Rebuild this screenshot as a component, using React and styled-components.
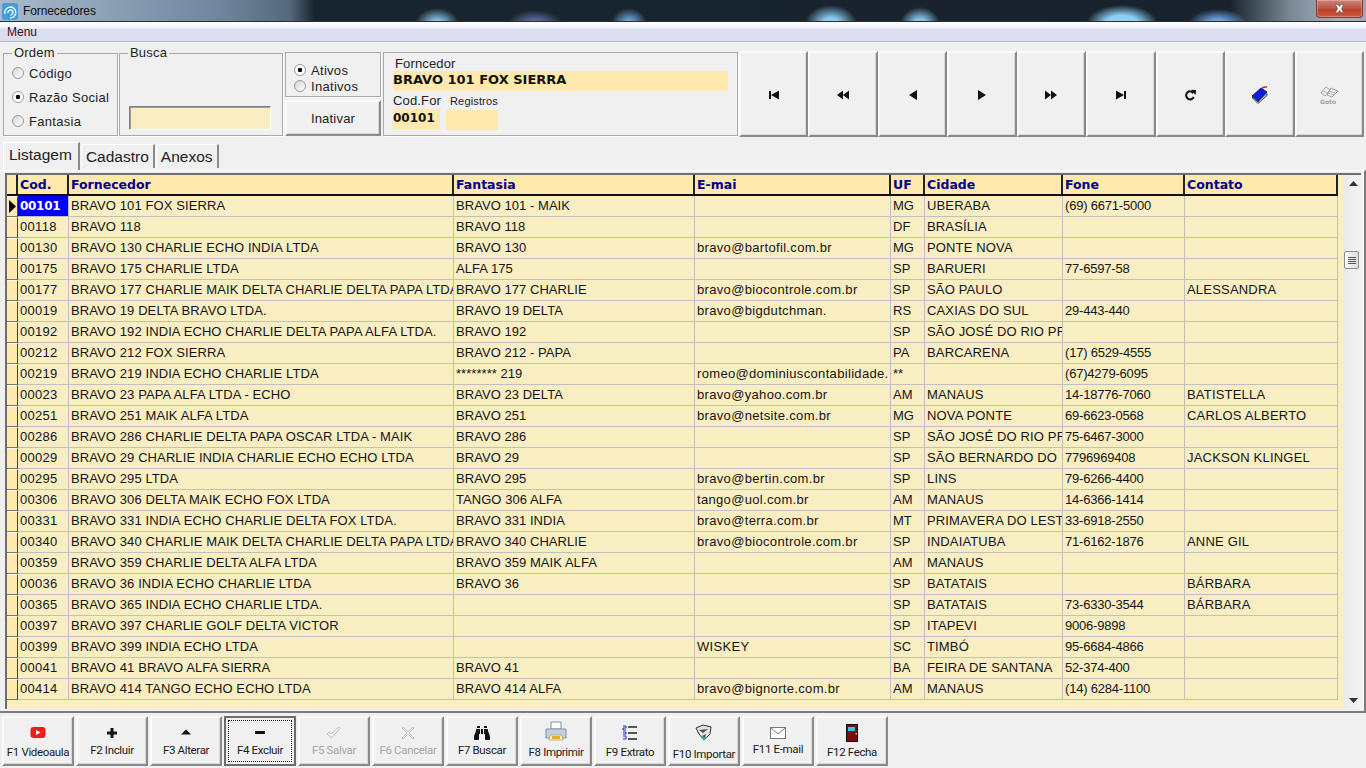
import React from 'react';
import styled, { createGlobalStyle, css } from 'styled-components';
import { FaBinoculars } from 'react-icons/fa';

const Global = createGlobalStyle`
  html, body { margin: 0; padding: 0; background: #f0f0f0; overflow: hidden; }
  * { box-sizing: border-box; }
  body { font-family: "Liberation Sans", Arial, sans-serif; color: #111; }
`;

const COLS = '11px 51px 385px 241px 196px 34px 138px 122px 153px';
const CREAM = '#f9eec2';
const GOLD = '#ffe9ac';

const Window = styled.div`
  width: 1366px; height: 768px; display: flex; flex-direction: column; overflow: hidden; background: #f0f0f0;
`;
const TitleBar = styled.header`
  height: 22px; flex: none; display: flex; align-items: flex-start; gap: 4px; padding: 2px 4px 0 2px;
  border-bottom: 1px solid #2a2e33;
  background:
    radial-gradient(ellipse 26px 19px at 831px 24px, #8fcdf0 30%, transparent 100%),
    radial-gradient(ellipse 20px 17px at 920px 24px, #86c2e6 30%, transparent 100%),
    radial-gradient(ellipse 36px 19px at 1122px 24px, #8fd0f5 45%, transparent 100%),
    radial-gradient(ellipse 30px 15px at 1218px 24px, #6f9fe0 30%, transparent 100%),
    radial-gradient(ellipse 22px 16px at 437px 24px, #88bde0 25%, transparent 100%),
    radial-gradient(ellipse 28px 14px at 535px 24px, #5d6c9a 25%, transparent 100%),
    radial-gradient(ellipse 18px 16px at 629px 24px, #6b9fd0 25%, transparent 100%),
    linear-gradient(90deg, #a9bacb 0, #8ea3b8 100px, #6d8298 230px, #54687d 290px, #18242f 315px, #18232d 1230px, #7b8894 1290px, #a3b1c1 1340px, #9aa8b8 1366px);
`;
const AppIcon = styled.svg`width: 16px; height: 17px; flex: none; margin-top: 1px;`;
const TitleText = styled.span`
  font-size: 12px; line-height: 18px; color: #0d0d0d; margin-left: 1px; letter-spacing: -0.1px;
`;
const CloseButton = styled.div`
  margin-left: auto; width: 47px; height: 18px; margin-top: -2px; margin-right: -1px;
  border: 1px solid #7a3d38; border-top: none; border-radius: 0 0 4px 4px;
  display: flex; align-items: center; justify-content: center;
  background: linear-gradient(#cf8577 0, #b85a4c 45%, #c13c22 60%, #c95a44 100%);
  box-shadow: inset 0 0 0 1px rgba(255,255,255,.25);
`;
const MenuBar = styled.nav`
  height: 20px; flex: none; padding: 3px 0 0 7px; font-size: 12px; line-height: 14px; color: #3c0a1e;
  background: linear-gradient(#ffffff 0, #f0f1f9 6px, #dadeef 7px, #dadeef 100%);
  border-bottom: 1px solid #b4b6c2;
`;
const Toolbar = styled.section`
  flex: none; height: 95px; display: flex; gap: 1px; padding: 9px 2px 0 3px;
`;
const raised = css`
  background: #f0f0f0;
  border: 2px solid; border-color: #fbfbfb #8a8a8a #8a8a8a #fbfbfb;
  box-shadow: inset -1px -1px 0 #d8d8d8;
`;
const Group = styled.fieldset`
  margin: -4px 0 0; padding: 2px 8px 5px; height: 89px; width: ${p => p.$w}px; min-width: 0; flex: none;
  border: 1px solid #a8a8a8; box-shadow: 1px 1px 0 #fff; display: flex; flex-direction: column;
  justify-content: ${p => p.$end ? 'flex-end' : 'flex-start'};
`;
const GroupLegend = styled.legend`
  padding: 0 2px; font-size: 13px; line-height: 12px; color: #222; letter-spacing: .2px;
`;
const RadioRow = styled.label`
  display: flex; flex: none; align-items: center; gap: 5px; height: ${p => p.$h}px; white-space: nowrap;
  font-size: 13px; letter-spacing: .3px; color: #222;
`;
const RadioDot = styled.span`
  width: 12px; height: 12px; border-radius: 50%; flex: none; border: 1px solid #9a9a9a;
  background: ${p => p.$on
    ? 'radial-gradient(circle, #111 0 2px, #fff 2.6px)'
    : 'linear-gradient(135deg, #d5d5d5, #fff)'};
`;
const SearchField = styled.div`
  height: 24px; width: 142px; margin-left: 1px; background: ${CREAM};
  border: 1px solid; border-color: #808080 #fff #fff #808080; box-shadow: inset 1px 1px 0 #9c9c9c;
`;
const StatusColumn = styled.div`
  width: 98px; flex: none; display: flex; flex-direction: column; gap: 3px; padding: 1px 1px 0;
`;
const StatusBox = styled.div`
  height: 45px; border: 1px solid #a8a8a8; box-shadow: 1px 1px 0 #fff; padding: 9px 0 0 8px; display: flex; flex-direction: column;
`;
const InactivateButton = styled.button`
  ${raised}; height: 36px; padding: 0; font: 13px "Liberation Sans", Arial, sans-serif; letter-spacing: .2px; color: #222;
`;
const SupplierPanel = styled.div`
  width: 355px; flex: none; height: 84px; margin-top: 1px; padding: 4px 9px 0;
  border: 1px solid #a8a8a8; box-shadow: 1px 1px 0 #fff; font-size: 13px;
`;
const FieldLabel = styled.div`
  color: #222; line-height: 14px; font-size: ${p => p.$fs ?? 13}px; margin-left: ${p => p.$ml ?? 0}px; letter-spacing: .15px;
`;
const ValueBox = styled.div`
  background: ${GOLD}; height: 20px; width: ${p => p.$w ? `${p.$w}px` : '100%'};
  font: bold ${p => p.$fs ?? 13}px/18px "DejaVu Sans", Verdana, sans-serif; color: #111; white-space: nowrap; overflow: hidden;
`;
const SubFields = styled.div`display: flex; gap: 5px; margin-top: 3px;`;
const SubField = styled.div`display: flex; flex-direction: column; gap: ${p => p.$gap ?? 1}px;`;
const NavGroup = styled.div`display: flex; width: 625px; flex: none; height: 86px;`;
const NavButton = styled.button`
  ${raised}; flex: 1; padding: 1px 0 0; display: flex; align-items: center; justify-content: center;
`;
const Glyph = styled.svg`
  width: ${p => p.$w ?? p.$s ?? 12}px; height: ${p => p.$s ?? 12}px; flex: none; display: block;
`;
const TabBar = styled.div`
  flex: none; height: 33px; padding: 5px 0 0 3px; display: flex; align-items: flex-start;
`;
const Tab = styled.div`
  height: ${p => p.$on ? 28 : 24}px; margin-top: ${p => p.$on ? 0 : 2}px; padding: 0 ${p => p.$on ? 6 : 4}px 0 ${p => p.$on ? 5 : 4}px;
  margin-right: 1px; font-size: 15.5px; line-height: ${p => p.$on ? 24 : 23}px; color: #222;
  border-top: 1px solid #fff; border-left: 1px solid #fff; border-right: 2px solid #8c8c8c;
  background: #f0f0f0;
`;
const Sheet = styled.main`
  flex: none; height: 541px; padding: 2px 0 2px 5px; display: flex; flex-direction: column;
  border-top: 1px solid #fff; border-right: 2px solid #7a7a7a; box-shadow: inset -1px 0 0 #fff;
`;
const GridFrame = styled.div`
  flex: 1; min-height: 0; display: flex; background: ${CREAM}; margin-right: 3px;
  border-top: 2px solid #6e6e6e; border-left: 2px solid #6e6e6e;
`;
const GridBody = styled.div`flex: none; width: 1337px;`;
const HeadRow = styled.div`
  display: grid; grid-template-columns: ${COLS}; width: 1331px; height: 21px; background: ${GOLD};
  border-bottom: 2px solid #111; border-right: 1px solid #111;
`;
const HeadCell = styled.div`
  padding-left: 2px; font: bold 12.5px/19px "DejaVu Sans", Verdana, sans-serif; color: #00008b;
  border-right: 2px solid #222; overflow: hidden; white-space: nowrap;
`;
const DataRow = styled.div`
  display: grid; grid-template-columns: ${COLS}; width: 1331px; height: 21px;
`;
const Marker = styled.div`
  background: ${GOLD}; border-right: 1px solid #444; border-bottom: 1px solid #777; border-top: 1px solid #fff;
  display: flex; align-items: center; justify-content: center;
`;
const Cell = styled.div`
  padding-left: 2px; font-size: 13px; line-height: 20px; color: #141414; white-space: nowrap; overflow: hidden;
  letter-spacing: ${p => p.$track ?? 0.1}px;
  border-right: 1px solid #c0c0c0; border-bottom: 1px solid #c0c0c0;
`;
const KeyCell = styled(Cell)`
  letter-spacing: .3px;
  ${p => p.$on && css`
    background: #0000ff; color: #fff; font: bold 12px/20px "DejaVu Sans", Verdana, sans-serif; letter-spacing: -.3px;
  `}
`;
const Scrollbar = styled.aside`
  width: 18px; flex: none; background: linear-gradient(90deg, #eaeaea, #f4f4f4); display: flex; flex-direction: column; align-items: center;
`;
const ScrollArrow = styled.div`
  height: 17px; width: 100%; display: flex; align-items: center; justify-content: center; flex: none;
  ${p => p.$end && 'margin-top: auto;'}
`;
const ScrollThumb = styled.div`
  margin: 59px 3px 0 0; width: 15px; height: 18px; border: 1px solid #8d8d8d; border-radius: 2px;
  background: linear-gradient(90deg, #fafafa, #dcdcdc); display: flex; flex-direction: column; align-items: center; justify-content: center; gap: 1px;
`;
const ThumbLine = styled.i`display: block; width: 8px; height: 1px; background: #555;`;
const Footer = styled.footer`
  flex: 1; border-top: 2px solid #7c7c7c; padding: 3px 2px 0; display: flex; gap: 2px;
`;
const FnButton = styled.button`
  ${raised}; width: 72px; height: 50px; padding: ${p => p.$top ?? 6}px 0 0; display: flex; flex-direction: column; align-items: center;
  font: 11.5px/14px Roboto, "Liberation Sans", Arial, sans-serif; letter-spacing: -.35px; color: ${p => p.$off ? '#a6a6a6' : '#1a1a1a'}; white-space: nowrap;
  ${p => p.$focus && css`
    border: 2px solid #6c6c6c; outline: 1px dotted #111; outline-offset: -5px; box-shadow: none;
  `}
`;
const FnIcon = styled.span`
  height: 18px; display: flex; align-items: center; justify-content: center; margin-bottom: ${p => p.$gap ?? 1}px; flex: none;
`;

const rows = [
  ['00101','BRAVO 101 FOX SIERRA','BRAVO 101 - MAIK','','MG','UBERABA','(69) 6671-5000',''],
  ['00118','BRAVO 118','BRAVO 118','','DF','BRASÍLIA','',''],
  ['00130','BRAVO 130 CHARLIE ECHO INDIA LTDA','BRAVO 130','bravo@bartofil.com.br','MG','PONTE NOVA','',''],
  ['00175','BRAVO 175 CHARLIE LTDA','ALFA 175','','SP','BARUERI','77-6597-58',''],
  ['00177','BRAVO 177 CHARLIE MAIK DELTA CHARLIE DELTA PAPA LTDA','BRAVO 177 CHARLIE','bravo@biocontrole.com.br','SP','SÃO PAULO','','ALESSANDRA'],
  ['00019','BRAVO 19 DELTA BRAVO LTDA.','BRAVO 19 DELTA','bravo@bigdutchman.','RS','CAXIAS DO SUL','29-443-440',''],
  ['00192','BRAVO 192 INDIA ECHO CHARLIE DELTA PAPA ALFA LTDA.','BRAVO 192','','SP','SÃO JOSÉ DO RIO PRETO','',''],
  ['00212','BRAVO 212 FOX SIERRA','BRAVO 212 - PAPA','','PA','BARCARENA','(17) 6529-4555',''],
  ['00219','BRAVO 219 INDIA ECHO CHARLIE LTDA','******** 219','romeo@dominiuscontabilidade.','**','','(67)4279-6095',''],
  ['00023','BRAVO 23 PAPA ALFA LTDA - ECHO','BRAVO 23 DELTA','bravo@yahoo.com.br','AM','MANAUS','14-18776-7060','BATISTELLA'],
  ['00251','BRAVO 251 MAIK ALFA LTDA','BRAVO 251','bravo@netsite.com.br','MG','NOVA PONTE','69-6623-0568','CARLOS ALBERTO'],
  ['00286','BRAVO 286 CHARLIE DELTA PAPA OSCAR LTDA - MAIK','BRAVO 286','','SP','SÃO JOSÉ DO RIO PRETO','75-6467-3000',''],
  ['00029','BRAVO 29 CHARLIE INDIA CHARLIE ECHO ECHO LTDA','BRAVO 29','','SP','SÃO BERNARDO DO','7796969408','JACKSON KLINGEL'],
  ['00295','BRAVO 295 LTDA','BRAVO 295','bravo@bertin.com.br','SP','LINS','79-6266-4400',''],
  ['00306','BRAVO 306 DELTA MAIK ECHO FOX LTDA','TANGO 306 ALFA','tango@uol.com.br','AM','MANAUS','14-6366-1414',''],
  ['00331','BRAVO 331 INDIA ECHO CHARLIE DELTA FOX LTDA.','BRAVO 331 INDIA','bravo@terra.com.br','MT','PRIMAVERA DO LESTE','33-6918-2550',''],
  ['00340','BRAVO 340 CHARLIE MAIK DELTA CHARLIE DELTA PAPA LTDA','BRAVO 340 CHARLIE','bravo@biocontrole.com.br','SP','INDAIATUBA','71-6162-1876','ANNE GIL'],
  ['00359','BRAVO 359 CHARLIE DELTA ALFA LTDA','BRAVO 359 MAIK ALFA','','AM','MANAUS','',''],
  ['00036','BRAVO 36 INDIA ECHO CHARLIE LTDA','BRAVO 36','','SP','BATATAIS','','BÁRBARA'],
  ['00365','BRAVO 365 INDIA ECHO CHARLIE LTDA.','','','SP','BATATAIS','73-6330-3544','BÁRBARA'],
  ['00397','BRAVO 397 CHARLIE GOLF DELTA VICTOR','','','SP','ITAPEVI','9006-9898',''],
  ['00399','BRAVO 399 INDIA ECHO LTDA','','WISKEY','SC','TIMBÓ','95-6684-4866',''],
  ['00041','BRAVO 41 BRAVO ALFA SIERRA','BRAVO 41','','BA','FEIRA DE SANTANA','52-374-400',''],
  ['00414','BRAVO 414 TANGO ECHO ECHO LTDA','BRAVO 414 ALFA','bravo@bignorte.com.br','AM','MANAUS','(14) 6284-1100',''],
];
const heads = ['', 'Cod.', 'Fornecedor', 'Fantasia', 'E-mai', 'UF', 'Cidade', 'Fone', 'Contato'];
const tracks = [0.1, 0.05, 0.33, 0, 0.15, -0.2, 0.2];

const navIcons = [
  <Glyph viewBox="0 0 12 12" key="first"><path d="M1 2h2v8H1zM3 6l8-4.500v9z" fill="#111" /></Glyph>,
  <Glyph viewBox="0 0 12 12" key="prev"><path d="M0 6l6-4.500v9zM6 6l6-4.500v9z" fill="#111" /></Glyph>,
  <Glyph viewBox="0 0 12 12" key="back"><path d="M2 6l8-5v10z" fill="#111" /></Glyph>,
  <Glyph viewBox="0 0 12 12" key="next"><path d="M10 6L2 1v10z" fill="#111" /></Glyph>,
  <Glyph viewBox="0 0 12 12" key="fwd"><path d="M6 6L0 1.500v9zM12 6L6 1.500v9z" fill="#111" /></Glyph>,
  <Glyph viewBox="0 0 12 12" key="last"><path d="M9 6L1 1.500v9zM9 2h2v8H9z" fill="#111" /></Glyph>,
  <Glyph viewBox="0 0 12 12" key="redo"><path d="M9.500 4.200A4 4 0 1 0 9.800 8" fill="none" stroke="#111" strokeWidth="2" /><path d="M7 .8l5 .2-.4 5z" fill="#111" /></Glyph>,
  <Glyph $s={18} viewBox="0 0 18 18" key="book">
    <path d="M1 10l9-8 6 4-9 9z" fill="#0a1ed8" stroke="#001080" strokeWidth=".8" />
    <path d="M1.500 11l5.500 5 9-8.500v2L7 17.500 1.500 12z" fill="#fff" stroke="#111" strokeWidth=".8" />
    <path d="M11 2.500C12 1 14 .8 16 1" fill="none" stroke="#d01818" strokeWidth="1.600" />
  </Glyph>,
  <Glyph $s={20} viewBox="0 0 20 20" key="goto">
    <path d="M2 8l5-6 4 3-5 6zM8 10l4-7 7 3-6 6z" fill="none" stroke="#9c9c9c" strokeWidth=".9" />
    <path d="M10 6l6 2M9 8l6 2M4 6l4 2" stroke="#a4a4a4" strokeWidth=".8" />
    <text x="1" y="18.500" fontSize="6" fontFamily="DejaVu Sans" fontWeight="bold" fill="#a0a0a0">Goto</text>
  </Glyph>,
];

const fnButtons = [
  { label: 'F1 Videoaula', top: 6, gap: 3, icon: <Glyph $s={18} viewBox="0 0 18 18"><rect x="1.500" y="3" width="15" height="11" rx="3" fill="#ee1c1c" /><path d="M7 6l4.500 2.500L7 11z" fill="#fff" /></Glyph> },
  { label: 'F2 Incluir', icon: <Glyph viewBox="0 0 12 12"><path d="M4.500 1h3v3.500H11v3H7.500V11h-3V7.500H1v-3h3.500z" fill="#111" /></Glyph> },
  { label: 'F3 Alterar', icon: <Glyph viewBox="0 0 12 12"><path d="M6 2.500l5 5H1z" fill="#111" /></Glyph> },
  { label: 'F4 Excluir', focus: true, icon: <Glyph viewBox="0 0 12 12"><path d="M1 4h10v3H1z" fill="#111" /></Glyph> },
  { label: 'F5 Salvar', off: true, icon: <Glyph $s={16} viewBox="0 0 16 16"><path d="M1 9l2-2 2 2 8-7 1 1.500L5.500 13z" fill="#f4f4f4" stroke="#b4b4b4" strokeWidth=".8" /></Glyph> },
  { label: 'F6 Cancelar', off: true, icon: <Glyph $s={14} viewBox="0 0 14 14"><path d="M2 1l5 4.500L12 1l1 1-5 5 5 5-1 1-5-5-5 5-1-1 5-5-5-5z" fill="#f4f4f4" stroke="#b0b0b0" strokeWidth=".7" /></Glyph> },
  { label: 'F7 Buscar', icon: <FaBinoculars size={16} color="#111" /> },
  { label: 'F8 Imprimir', top: 5, gap: 4, icon: <Glyph $s={22} viewBox="0 0 22 22"><path d="M6 1h10v7H6z" fill="#fff" stroke="#8090b0" /><path d="M1 8h20v9H1z" fill="#c6cfe0" stroke="#8090a8" /><path d="M5 14h12l1 5H4z" fill="#f8f0b0" stroke="#a09060" strokeWidth=".6" /><path d="M7 15h8v3H7z" fill="#e8b020" /></Glyph> },
  { label: 'F9 Extrato', gap: 3, icon: <Glyph $s={16} viewBox="0 0 16 16"><path d="M1 1h3M4 1v2H1v2h3M1 7h3v2H1M1 11h3v3H1" fill="none" stroke="#2030b0" strokeWidth="1" /><path d="M6 2h9M6 8h9M6 14h9" stroke="#222" strokeWidth="1.300" /></Glyph> },
  { label: 'F10 Importar', gap: 5, icon: <Glyph $s={18} viewBox="0 0 18 18"><path d="M1 4l7-3 8 2-1 7-6 6-5-6z" fill="#dfe4e4" stroke="#333" strokeWidth="1" /><path d="M4 6l9-1-5 4zM7 12l4-2-1 5z" fill="#555" /><path d="M6 13l3 4 3-4z" fill="#20b0b8" /></Glyph> },
  { label: 'F11 E-mail', gap: 0, icon: <Glyph $s={16} viewBox="0 0 16 16"><rect x=".5" y="2.500" width="15" height="11" fill="#fff" stroke="#777" /><path d="M1 3l7 6 7-6" fill="none" stroke="#777" /></Glyph> },
  { label: 'F12 Fecha', gap: 3, icon: <Glyph $s={18} $w={12} viewBox="3 0 12 18"><rect x="3.500" y=".5" width="11" height="17" fill="#7a0c0c" stroke="#111" /><rect x="5" y="3" width="7" height="4" fill="#20d0e0" /><rect x="12.500" y="9" width="1.500" height="1.500" fill="#f0c040" /></Glyph> },
];

export default function App() {
  return (
    <Window>
      <Global />
      <TitleBar>
        <AppIcon viewBox="0 0 16 17">
          <rect x="0" y="0" width="16" height="17" rx="3" fill="#3f9de0" />
          <path d="M3 11a5.500 5.500 0 1 1 5 4M6 10a2.500 2.500 0 1 1 2.500 2" fill="none" stroke="#fff" strokeWidth="1.300" />
        </AppIcon>
        <TitleText>Fornecedores</TitleText>
        <CloseButton>
          <Glyph $s={11} viewBox="0 0 12 12"><path d="M1.500 1.500h3L6 4l1.500-2.500h3L8 6l2.500 4.500h-3L6 8l-1.500 2.500h-3L4 6z" fill="#fff" stroke="#444" strokeWidth=".6" /></Glyph>
        </CloseButton>
      </TitleBar>
      <MenuBar>Menu</MenuBar>
      <Toolbar>
        <Group $w={115}>
          <GroupLegend>Ordem</GroupLegend>
          <RadioRow $h={24}><RadioDot />Código</RadioRow>
          <RadioRow $h={24}><RadioDot $on />Razão Social</RadioRow>
          <RadioRow $h={24}><RadioDot />Fantasia</RadioRow>
        </Group>
        <Group $w={164} $end>
          <GroupLegend>Busca</GroupLegend>
          <SearchField />
        </Group>
        <StatusColumn>
          <StatusBox>
            <RadioRow $h={16}><RadioDot $on />Ativos</RadioRow>
            <RadioRow $h={16}><RadioDot />Inativos</RadioRow>
          </StatusBox>
          <InactivateButton>Inativar</InactivateButton>
        </StatusColumn>
        <SupplierPanel>
          <FieldLabel $ml={2}>Forncedor</FieldLabel>
          <ValueBox>BRAVO 101 FOX SIERRA</ValueBox>
          <SubFields>
            <SubField>
              <FieldLabel>Cod.For</FieldLabel>
              <ValueBox $w={47} $fs={12}>00101</ValueBox>
            </SubField>
            <SubField $gap={2}>
              <FieldLabel $fs={11} $ml={4}>Registros</FieldLabel>
              <ValueBox $w={52} />
            </SubField>
          </SubFields>
        </SupplierPanel>
        <NavGroup>
          {navIcons.map((icon, i) => <NavButton key={i}>{icon}</NavButton>)}
        </NavGroup>
      </Toolbar>
      <TabBar>
        <Tab $on>Listagem</Tab>
        <Tab>Cadastro</Tab>
        <Tab>Anexos</Tab>
      </TabBar>
      <Sheet>
        <GridFrame>
          <GridBody>
            <HeadRow>{heads.map((h, i) => <HeadCell key={i}>{h}</HeadCell>)}</HeadRow>
            {rows.map((r, i) => (
              <DataRow key={r[0]}>
                <Marker>
                  {i === 0 && <Glyph $s={13} $w={8} viewBox="0 0 8 13"><path d="M1 0l7 6.500L1 13z" fill="#000" /></Glyph>}
                </Marker>
                <KeyCell $on={i === 0}>{r[0]}</KeyCell>
                {r.slice(1).map((v, j) => <Cell key={j} $track={tracks[j]}>{v}</Cell>)}
              </DataRow>
            ))}
          </GridBody>
          <Scrollbar>
            <ScrollArrow><Glyph $s={9} viewBox="0 0 9 9"><path d="M4.500 2L9 7H0z" fill="#333" /></Glyph></ScrollArrow>
            <ScrollThumb><ThumbLine /><ThumbLine /><ThumbLine /><ThumbLine /></ScrollThumb>
            <ScrollArrow $end><Glyph $s={9} viewBox="0 0 9 9"><path d="M4.500 7L9 2H0z" fill="#333" /></Glyph></ScrollArrow>
          </Scrollbar>
        </GridFrame>
      </Sheet>
      <Footer>
        {fnButtons.map(b => (
          <FnButton key={b.label} $off={b.off} $focus={b.focus} $top={b.top}>
            <FnIcon $gap={b.gap}>{b.icon}</FnIcon>
            {b.label}
          </FnButton>
        ))}
      </Footer>
    </Window>
  );
}
